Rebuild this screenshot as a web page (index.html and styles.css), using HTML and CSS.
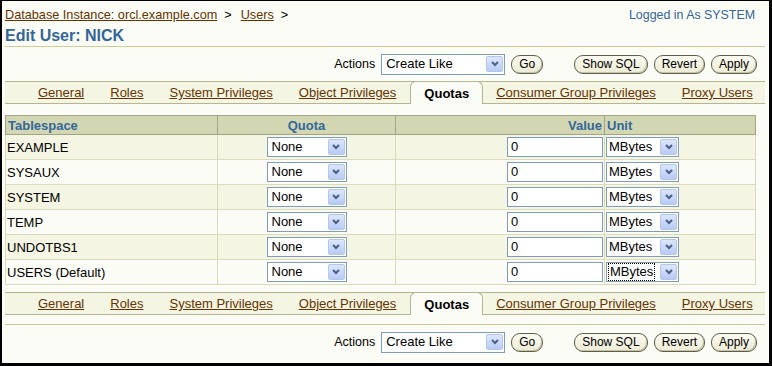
FILE: index.html
```html
<!DOCTYPE html>
<html lang="en">
<head>
    <meta charset="UTF-8">
    <title>Edit User: NICK</title>
    <link rel="stylesheet" href="styles.css">
</head>
<body>
    <div class="page">
        <div class="topbar">
            <div class="crumbs">
                <a href="#">Database Instance: orcl.example.com</a><span class="sep">&gt;</span><a href="#">Users</a><span class="sep">&gt;</span>
            </div>
            <div class="login">Logged in As SYSTEM</div>
        </div>
        <h1 class="title">Edit User: NICK</h1>

        <div class="actions">
            <span class="label">Actions</span>
            <span class="select wide"><span class="val">Create Like</span><span class="arrow"><svg width="8" height="6" viewBox="0 0 8 6"><path d="M1 1 L4 4 L7 1" fill="none" stroke="#4a5f86" stroke-width="2"/></svg></span></span>
            <button class="btn">Go</button>
            <button class="btn gap">Show SQL</button>
            <button class="btn">Revert</button>
            <button class="btn">Apply</button>
        </div>

        <ul class="tabs">
            <li><a href="#">General</a></li>
            <li><a href="#">Roles</a></li>
            <li><a href="#">System Privileges</a></li>
            <li><a href="#">Object Privileges</a></li>
            <li class="active">Quotas</li>
            <li><a href="#">Consumer Group Privileges</a></li>
            <li><a href="#">Proxy Users</a></li>
        </ul>

        <table class="quotas">
            <thead>
                <tr>
                    <th class="c1">Tablespace</th>
                    <th class="c2">Quota</th>
                    <th class="c3">Value</th>
                    <th class="c4">Unit</th>
                </tr>
            </thead>
            <tbody id="rows"></tbody>
        </table>

        <ul class="tabs">
            <li><a href="#">General</a></li>
            <li><a href="#">Roles</a></li>
            <li><a href="#">System Privileges</a></li>
            <li><a href="#">Object Privileges</a></li>
            <li class="active">Quotas</li>
            <li><a href="#">Consumer Group Privileges</a></li>
            <li><a href="#">Proxy Users</a></li>
        </ul>
        <div class="divider"></div>

        <div class="actions">
            <span class="label">Actions</span>
            <span class="select wide"><span class="val">Create Like</span><span class="arrow"><svg width="8" height="6" viewBox="0 0 8 6"><path d="M1 1 L4 4 L7 1" fill="none" stroke="#4a5f86" stroke-width="2"/></svg></span></span>
            <button class="btn">Go</button>
            <button class="btn gap">Show SQL</button>
            <button class="btn">Revert</button>
            <button class="btn">Apply</button>
        </div>
    </div>
    <script>
        let tablespaces = ["EXAMPLE", "SYSAUX", "SYSTEM", "TEMP", "UNDOTBS1", "USERS (Default)"]
        let rows = document.getElementById("rows")
        let arrow = '<span class="arrow"><svg width="8" height="6" viewBox="0 0 8 6"><path d="M1 1 L4 4 L7 1" fill="none" stroke="#4a5f86" stroke-width="2"/></svg></span>'

        for(let i=0;i<tablespaces.length;i++){
            let tr = document.createElement("tr")
            if(i%2===0) tr.className = "odd"
            let unitClass = i===tablespaces.length-1 ? "val focus" : "val"
            tr.innerHTML =
                '<td>'+tablespaces[i]+'</td>'+
                '<td class="center"><span class="select quota"><span class="val">None</span>'+arrow+'</span></td>'+
                '<td class="right"><span class="input">0</span></td>'+
                '<td><span class="select unit"><span class="'+unitClass+'">MBytes</span>'+arrow+'</span></td>'
            rows.appendChild(tr)
        }
    </script>
</body>
</html>
```

FILE: styles.css
```css
html, body{
    margin: 0;
    height: 100%;
}
body{
    box-sizing: border-box;
    height: 366px;
    overflow: hidden;
    background: #fcfcf6;
    border-style: solid;
    border-color: #000;
    border-width: 1px 3px 3px 2px;
    font-family: "Liberation Sans", Arial, sans-serif;
    font-size: 13px;
    color: #000;
}
.page{
    padding: 0 4px 0 3px;
}
a{
    color: #663300;
    text-decoration: underline;
}
.topbar{
    display: flex;
    justify-content: space-between;
    padding-top: 5px;
    line-height: 18px;
}
.crumbs{
    font-size: 12.7px;
}
.sep{
    margin: 0 9px 0 7px;
}
.login{
    color: #336699;
    margin-right: 10px;
    font-size: 12.4px;
}
.title{
    margin: 2px 0 0;
    font-size: 16px;
    line-height: 20px;
    font-weight: bold;
    color: #336699;
    border-bottom: 1px solid #cccc99;
}
.actions{
    display: flex;
    justify-content: flex-end;
    align-items: center;
    gap: 6px;
    margin-top: 7px;
    height: 20px;
    padding-right: 8px;
}
.actions .label{
    font-size: 12.5px;
}
.actions .gap{
    margin-left: 25px;
}
.select{
    display: inline-flex;
    align-items: center;
    justify-content: space-between;
    box-sizing: border-box;
    height: 20px;
    border: 1px solid #7f9db9;
    background: #fff;
    padding-left: 4px;
    vertical-align: middle;
    white-space: nowrap;
}
.select.wide{
    width: 124px;
    height: 21px;
}
.select.quota{
    width: 80px;
}
.select.unit{
    width: 73px;
    padding-left: 2px;
}
.val{
    line-height: 16px;
}
.val.focus{
    outline: 1px dotted #000;
    padding: 0 1px;
}
.arrow{
    display: flex;
    align-items: center;
    justify-content: center;
    box-sizing: border-box;
    width: 17px;
    height: 16px;
    margin-right: 1px;
    background: linear-gradient(#dce6fd, #b8cbf6);
    border: 1px solid #b4c6ee;
    border-radius: 2px;
}
.btn{
    box-sizing: border-box;
    height: 19px;
    padding: 0 7px;
    font-family: "Liberation Sans", Arial, sans-serif;
    font-size: 12px;
    line-height: 16px;
    color: #000;
    background: linear-gradient(#fbfbf0, #ecebd6);
    border: 1px solid #5f5f4c;
    border-radius: 9px;
    box-shadow: inset -1px -1px 0 #c5c4a6;
}
.tabs{
    list-style: none;
    display: flex;
    margin: 7px 0 0;
    padding: 0 0 0 20px;
    height: 21px;
    background: #f5f5e3;
    border-top: 1px solid #b4b690;
    border-bottom: 1px solid #b4b690;
    white-space: nowrap;
    font-size: 13px;
}
.tabs li{
    flex-shrink: 0;
    padding: 0 13px;
    line-height: 21px;
}
.tabs li.active{
    margin: -1px 0 -1px 1px;
    padding: 0 13px;
    line-height: 23px;
    font-weight: bold;
    background: #fcfcf6;
    border: 1px solid #b4b690;
    border-bottom: none;
    border-radius: 6px 6px 0 0;
}
.quotas{
    margin-top: 11px;
    width: 751px;
    border-collapse: collapse;
    font-size: 13px;
    border: 1px solid #c8caa3;
}
.quotas th{
    height: 18px;
    padding: 0 2px;
    background: #d3d6b3;
    color: #336699;
    font-weight: bold;
    border: 1px solid #a2a486;
    text-align: left;
}
.quotas .c1{ width: 207px; }
.quotas .c2{ width: 173px; text-align: center; }
.quotas .c3{ width: 204px; text-align: right; }
.quotas .c4{ width: 146px; }
.quotas td{
    height: 24px;
    padding: 0 1px;
    border: 1px solid #d9dbbb;
    background: #fcfcf6;
}
.quotas tr.odd td{
    background: #f5f5e3;
}
.center{
    text-align: center;
}
.right{
    text-align: right;
}
.input{
    display: inline-block;
    box-sizing: border-box;
    width: 96px;
    height: 20px;
    padding-left: 3px;
    line-height: 18px;
    text-align: left;
    background: #fff;
    border: 1px solid #7f9db9;
    vertical-align: middle;
}
.divider{
    margin-top: 9px;
    border-top: 1px solid #cccc99;
}
```
